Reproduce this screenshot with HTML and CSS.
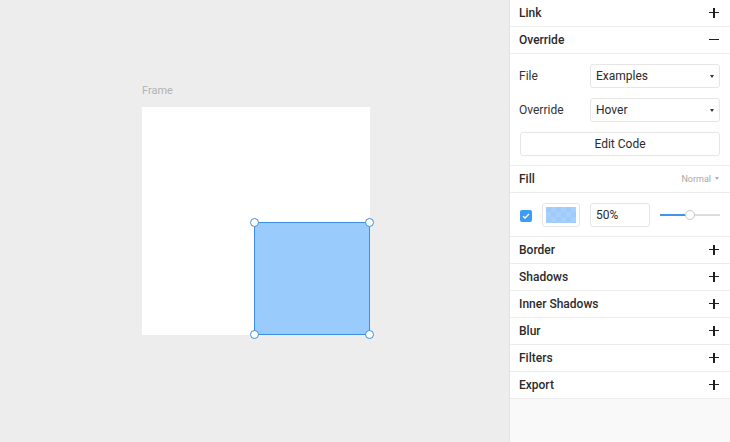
FILE: index.html
```html
<!DOCTYPE html>
<html lang="en">
<head>
  <meta charset="UTF-8">
  <title>Framer Inspector</title>
  <link rel="stylesheet" href="styles.css">
</head>
<body>

<div class="app">
  <div class="canvas">
    <div class="frame">
      <div class="frame-label">Frame</div>
      <div class="frame-box"></div>
      <div class="layer">
        <span class="handle tl"></span>
        <span class="handle tr"></span>
        <span class="handle bl"></span>
        <span class="handle br"></span>
      </div>
    </div>
  </div>

  <div class="panel">
    <div class="head">
      <span>Link</span>
      <span class="icon plus"></span>
    </div>

    <div class="head">
      <span>Override</span>
      <span class="icon minus"></span>
    </div>
    <div class="body">
      <div class="field">
        <label>File</label>
        <div class="select">Examples</div>
      </div>
      <div class="field">
        <label>Override</label>
        <div class="select">Hover</div>
      </div>
      <button class="btn">Edit Code</button>
    </div>

    <div class="head">
      <span>Fill</span>
      <span class="blend">Normal</span>
    </div>
    <div class="body fill">
      <span class="check">
        <svg width="8" height="6" viewBox="0 0 8 6"><path d="M1 3.2 L3 5 L7 1" fill="none" stroke="#fff" stroke-width="1.4"/></svg>
      </span>
      <span class="swatch"><span class="swatch-color"></span></span>
      <input class="num" type="text" value="50%">
      <div class="slider">
        <span class="track-on"></span>
        <span class="thumb"></span>
        <span class="track-off"></span>
      </div>
    </div>

    <div class="head">
      <span>Border</span>
      <span class="icon plus"></span>
    </div>
    <div class="head">
      <span>Shadows</span>
      <span class="icon plus"></span>
    </div>
    <div class="head">
      <span>Inner Shadows</span>
      <span class="icon plus"></span>
    </div>
    <div class="head">
      <span>Blur</span>
      <span class="icon plus"></span>
    </div>
    <div class="head">
      <span>Filters</span>
      <span class="icon plus"></span>
    </div>
    <div class="head">
      <span>Export</span>
      <span class="icon plus"></span>
    </div>
  </div>
</div>

</body>
</html>
```

FILE: styles.css
```css
:root {
  --canvas-bg: #ededed;
  --panel-bg: #f9f9f9;
  --line: #ececec;
  --blue: #3d96ea;
  --text: #2b2b2b;
}

* {
  box-sizing: border-box;
}

body {
  margin: 0;
  font-family: Roboto, 'Liberation Sans', sans-serif;
  font-size: 12px;
  color: var(--text);
}

.app {
  display: flex;
  height: 442px;
}

/* canvas */
.canvas {
  flex: 1;
  background: var(--canvas-bg);
  position: relative;
  border-right: 1px solid #e2e2e2;
}

.frame {
  position: absolute;
  left: 142px;
  top: 107px;
  width: 228px;
  height: 228px;
}

.frame-label {
  position: absolute;
  top: -23px;
  left: 0;
  font-size: 11px;
  color: #b3b3b3;
}

.frame-box {
  width: 100%;
  height: 100%;
  background: #fff;
}

.layer {
  position: absolute;
  left: 112px;
  top: 115px;
  width: 116px;
  height: 113px;
  background: #99ccfd;
  border: 1px solid #3a8fe0;
}

.handle {
  position: absolute;
  width: 9px;
  height: 9px;
  border-radius: 50%;
  background: #fff;
  border: 1px solid #3a8fe0;
}

.handle.tl { left: -5px; top: -5px; }
.handle.tr { right: -5px; top: -5px; }
.handle.bl { left: -5px; bottom: -5px; }
.handle.br { right: -5px; bottom: -5px; }

/* inspector */
.panel {
  width: 220px;
  background: var(--panel-bg);
}

.head {
  display: flex;
  align-items: center;
  justify-content: space-between;
  height: 27px;
  padding: 0 11px 1px 9px;
  background: #fff;
  border-bottom: 1px solid var(--line);
  font-weight: 500;
}

.icon {
  position: relative;
  width: 10px;
  height: 10px;
}

.icon::before,
.icon::after {
  content: '';
  position: absolute;
  background: #1f1f1f;
}

.icon::before {
  left: 0;
  top: 4px;
  width: 10px;
  height: 1.5px;
}

.plus::after {
  left: 4.25px;
  top: 0;
  width: 1.5px;
  height: 10px;
}

.minus::after {
  display: none;
}

.blend {
  font-size: 9px;
  font-weight: 400;
  color: #a8a8a8;
}

.blend::after {
  content: '';
  display: inline-block;
  margin-left: 4px;
  vertical-align: 2px;
  border-left: 2.5px solid transparent;
  border-right: 2.5px solid transparent;
  border-top: 3px solid #b0b0b0;
}

.body {
  background: #fff;
  border-bottom: 1px solid var(--line);
  padding: 10px 10px 9px;
  display: flex;
  flex-direction: column;
  gap: 10px;
}

.field {
  display: flex;
  align-items: center;
}

.field label {
  width: 71px;
  margin-left: -1px;
  color: #333;
}

.select,
.btn,
.num,
.swatch {
  height: 24px;
  background: #fff;
  border: 1px solid #e6e6e6;
  border-radius: 3px;
}

.select {
  flex: 1;
  position: relative;
  padding-left: 5px;
  line-height: 22px;
}

.select::after {
  content: '';
  position: absolute;
  right: 5px;
  top: 10px;
  border-left: 2.5px solid transparent;
  border-right: 2.5px solid transparent;
  border-top: 3px solid #333;
}

.btn {
  width: 100%;
  font-family: inherit;
  font-size: 12px;
  color: var(--text);
  padding: 0;
}

.fill {
  flex-direction: row;
  align-items: center;
  gap: 0;
}

.check {
  width: 12px;
  height: 12px;
  margin-top: 1px;
  border-radius: 2px;
  background: #3d9cf0;
  display: flex;
  align-items: center;
  justify-content: center;
}

.swatch {
  width: 38px;
  margin-left: 10px;
  padding: 3px;
}

.swatch-color {
  display: block;
  height: 100%;
  background-color: #9fcbfc;
  background-image:
    linear-gradient(45deg, #a9d0fb 25%, transparent 25%, transparent 75%, #a9d0fb 75%),
    linear-gradient(45deg, #a9d0fb 25%, transparent 25%, transparent 75%, #a9d0fb 75%);
  background-size: 10px 10px;
  background-position: 0 0, 5px 5px;
}

.num {
  width: 60px;
  margin-left: 10px;
  padding: 0 5px;
  font-family: inherit;
  font-size: 12px;
  color: var(--text);
  outline: none;
}

.slider {
  flex: 1;
  margin-left: 10px;
  display: flex;
  align-items: center;
}

.track-on {
  width: 26px;
  height: 2px;
  background: var(--blue);
}

.track-off {
  flex: 1;
  height: 2px;
  background: #dcdcdc;
}

.thumb {
  width: 10px;
  height: 10px;
  border-radius: 50%;
  background: #fff;
  border: 1px solid #c8c8c8;
  margin: 0 -1px;
  position: relative;
}
```
